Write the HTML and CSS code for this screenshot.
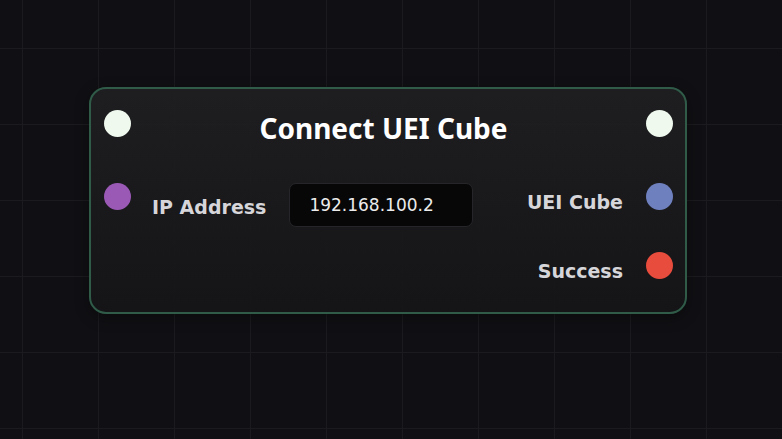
FILE: index.html
```html
<!DOCTYPE html>
<html lang="en">
<head>
<meta charset="utf-8">
<title>Connect UEI Cube</title>
<link rel="stylesheet" href="styles.css">
</head>
<body>
<div class="canvas">
  <div class="node">
    <div class="head">
      <span class="dot dot-exec"></span>
      <h1 class="title">Connect UEI Cube</h1>
      <span class="dot dot-exec"></span>
    </div>
    <div class="body">
      <div class="inputs">
        <div class="in-row">
          <span class="dot dot-string"></span>
          <span class="label label-in">IP Address</span>
          <div class="field">192.168.100.2</div>
        </div>
      </div>
      <div class="outputs">
        <div class="out-row">
          <span class="label">UEI Cube</span>
          <span class="dot dot-object"></span>
        </div>
        <div class="out-row">
          <span class="label">Success</span>
          <span class="dot dot-bool"></span>
        </div>
      </div>
    </div>
  </div>
</div>
</body>
</html>
```

FILE: styles.css
```css
html, body {
  margin: 0;
  padding: 0;
}
body {
  width: 782px;
  height: 439px;
  overflow: hidden;
  background-color: #101014;
  font-family: "DejaVu Sans", sans-serif;
}
.canvas {
  position: relative;
  width: 782px;
  height: 439px;
  background-color: #101014;
  background-image:
    linear-gradient(to right, #1b1b1f 1px, transparent 1px),
    linear-gradient(to bottom, #1b1b1f 1px, transparent 1px);
  background-size: 76px 76px;
  background-position: 22px 48px;
}
.node {
  position: absolute;
  left: 89px;
  top: 87px;
  width: 598px;
  height: 227px;
  box-sizing: border-box;
  border: 2px solid #2f5b48;
  border-radius: 17px;
  background: linear-gradient(to bottom, rgba(31, 31, 33, 0.94), rgba(21, 21, 23, 0.94));
  box-shadow: 0 4px 14px rgba(0, 0, 0, 0.35);
  padding: 21px 12px 0 13px;
  display: flex;
  flex-direction: column;
}
.head {
  display: flex;
  align-items: flex-start;
  height: 27px;
}
.dot {
  flex: none;
  width: 27px;
  height: 27px;
  border-radius: 50%;
}
.dot-exec { background: #eff9ee; }
.dot-string { background: #9b59b6; }
.dot-object { background: #6f80bf; }
.dot-bool { background: #e74c3c; }
.title {
  flex: 1;
  margin: 4px 10px 0 0;
  text-align: center;
  font-family: "Noto Sans", "DejaVu Sans", sans-serif;
  font-weight: 700;
  font-size: 28px;
  line-height: 28px;
  color: #ffffff;
}
.body {
  display: flex;
  justify-content: space-between;
  margin-top: 46px;
}
.in-row {
  display: flex;
  align-items: flex-start;
}
.label {
  font-family: "DejaVu Sans", sans-serif;
  font-weight: 700;
  font-size: 19px;
  line-height: 27px;
  color: #d6d6da;
  padding-top: 6px;
}
.label-in {
  margin-left: 21px;
  margin-right: 23px;
  line-height: 44px;
  padding-top: 2px;
}
.field {
  box-sizing: border-box;
  width: 184px;
  height: 44px;
  border: 1px solid #26262a;
  border-radius: 7px;
  background: #070708;
  padding-left: 19px;
  font-family: "DejaVu Sans", sans-serif;
  font-size: 17px;
  line-height: 43px;
  color: #ececec;
}
.outputs {
  display: flex;
  flex-direction: column;
  align-items: flex-end;
  gap: 36px;
}
.out-row {
  display: flex;
  align-items: flex-start;
  gap: 23px;
}
```
